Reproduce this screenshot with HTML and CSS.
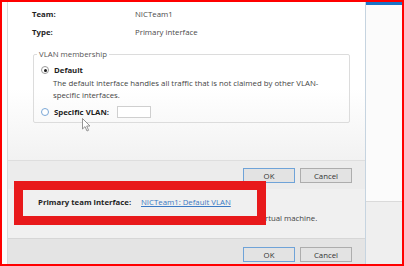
FILE: index.html
```html
<!DOCTYPE html>
<html>
<head>
<meta charset="utf-8">
<link rel="stylesheet" href="styles.css">
</head>
<body>
<div class="screen">
  <div class="gutter"></div>
  <div class="main">
    <div class="dialog front">
      <div class="body">
        <div class="props">
          <span class="lbl">Team:</span><span class="val">NICTeam1</span>
          <span class="lbl">Type:</span><span class="val">Primary interface</span>
        </div>
        <fieldset class="group">
          <legend>VLAN membership</legend>
          <div class="radio-row">
            <span class="radio checked"></span><span class="rlabel">Default</span>
          </div>
          <p class="desc">The default interface handles all traffic that is not claimed by other VLAN-<br>specific interfaces.</p>
          <div class="radio-row specific">
            <span class="radio"></span><span class="rlabel">Specific VLAN:</span><span class="field"></span>
          </div>
        </fieldset>
      </div>
      <div class="bar">
        <button class="btn default">OK</button>
        <button class="btn">Cancel</button>
      </div>
    </div>
    <div class="dialog back">
      <div class="body">
        <div class="props">
          <span class="lbl">Primary team interface:</span><a class="link">NICTeam1: Default VLAN</a>
        </div>
        <p class="note">Some settings are not available for team interfaces used in a virtual machine.</p>
      </div>
      <div class="bar">
        <button class="btn default">OK</button>
        <button class="btn">Cancel</button>
      </div>
    </div>
  </div>
  <div class="side">
    <div class="side-accent"></div>
    <div class="side-upper"></div>
    <div class="side-lower"></div>
  </div>
  <div class="highlight"></div>
  <svg class="cursor" width="10" height="14" viewBox="0 0 10 14"><path d="M0.5 0.5 L0.5 11 L3 8.6 L5 13 L6.6 12.3 L4.7 8 L8 8 Z" fill="#fff" stroke="#8a8a8a" stroke-width="0.9" stroke-linejoin="round"/></svg>
</div>
</body>
</html>
```
FILE: styles.css
```css
html, body {
  margin: 0;
  padding: 0;
  background: #fff;
}

.screen {
  position: relative;
  width: 404px;
  height: 266px;
  box-sizing: border-box;
  border: 2px solid #ff0000;
  display: flex;
  overflow: hidden;
  background: #fafafa;
  font-family: "Open Sans", "Noto Sans", sans-serif;
  font-size: 7.8px;
  color: #333;
}

.gutter {
  width: 5px;
  background: #fdfdfd;
}

.main {
  width: 359px;
  display: flex;
  flex-direction: column;
}

.dialog {
  box-sizing: border-box;
  border-left: 1px solid #d9d9d9;
  border-right: 1px solid #c6d4e0;
  display: flex;
  flex-direction: column;
}

.front {
  height: 187px;
}

.front .body {
  flex: 1;
  padding: 3px 15px 0 24px;
  background: linear-gradient(#ffffff 0%, #ffffff 55%, #f2f2f2 100%);
}

.props {
  display: grid;
  grid-template-columns: 103px auto;
  grid-auto-rows: 18px;
  align-items: center;
}

.lbl {
  font-weight: 700;
  color: #1e1e1e;
}

.val {
  color: #4a4a4a;
}

.group {
  margin: 8px 0 0 1px;
  padding: 5px 7px 3px 7px;
  border: 1px solid #dcdcdc;
  border-radius: 2px;
  min-width: 0;
}

.group legend {
  padding: 0 2px;
  margin-left: -4px;
  line-height: 10px;
  color: #555;
}

.radio-row {
  display: flex;
  align-items: center;
  height: 12px;
}

.radio {
  width: 8px;
  height: 8px;
  box-sizing: border-box;
  border-radius: 50%;
  border: 1px solid #7aa7d6;
  background: #fff;
  margin-right: 5px;
  position: relative;
}

.radio.checked {
  border-color: #9a9a9a;
}

.radio.checked::after {
  content: "";
  position: absolute;
  left: 1.5px;
  top: 1.5px;
  width: 3px;
  height: 3px;
  border-radius: 50%;
  background: #1a1a1a;
}

.rlabel {
  font-weight: 700;
  color: #1e1e1e;
}

.desc {
  margin: 1px 0 0 12px;
  line-height: 12px;
  color: #444;
  white-space: nowrap;
}

.radio-row.specific {
  height: 14px;
  margin-top: 4px;
}

.field {
  width: 34px;
  height: 12px;
  box-sizing: border-box;
  border: 1px solid #cfcfcf;
  background: #fff;
  margin-left: 8px;
}

.bar {
  display: flex;
  justify-content: flex-end;
  align-items: flex-start;
  gap: 5px;
  padding-right: 13px;
  box-sizing: border-box;
  border-top: 1px solid #dedede;
}

.front .bar {
  height: 29px;
  padding-top: 7px;
  background: #ececec;
}

.btn {
  width: 52px;
  height: 15px;
  padding: 0;
  box-sizing: border-box;
  border: 1px solid #adadad;
  background: #e3e3e3;
  font-family: "Open Sans", "Noto Sans", sans-serif;
  font-size: 7.8px;
  color: #333;
}

.btn.default {
  border-color: #6fa3d8;
}

.back {
  flex: 1;
}

.back .body {
  height: 49px;
  box-sizing: border-box;
  padding: 7px 0 0 30px;
  background: #f0f0f0;
}

.back .props {
  grid-auto-rows: 12px;
}

.link {
  color: #3a78c4;
  text-decoration: underline;
}

.note {
  margin: 4px 0 0 0;
  line-height: 12px;
  color: #444;
  white-space: nowrap;
}

.back .bar {
  flex: 1;
  padding-top: 8px;
  background: #e4e4e4;
  border-top-color: #d6d6d6;
}

.side {
  flex: 1;
  display: flex;
  flex-direction: column;
}

.side-accent {
  height: 3px;
  background: #1b74c6;
}

.side-upper {
  height: 196px;
  background: #fbfbfb;
  border-bottom: 1px solid #dadada;
}

.side-lower {
  flex: 1;
  background: #efefef;
}

.highlight {
  position: absolute;
  left: 12px;
  top: 179px;
  width: 252px;
  height: 44px;
  box-sizing: border-box;
  border: 9px solid #e8191b;
}

.cursor {
  position: absolute;
  left: 80px;
  top: 116px;
}
```
